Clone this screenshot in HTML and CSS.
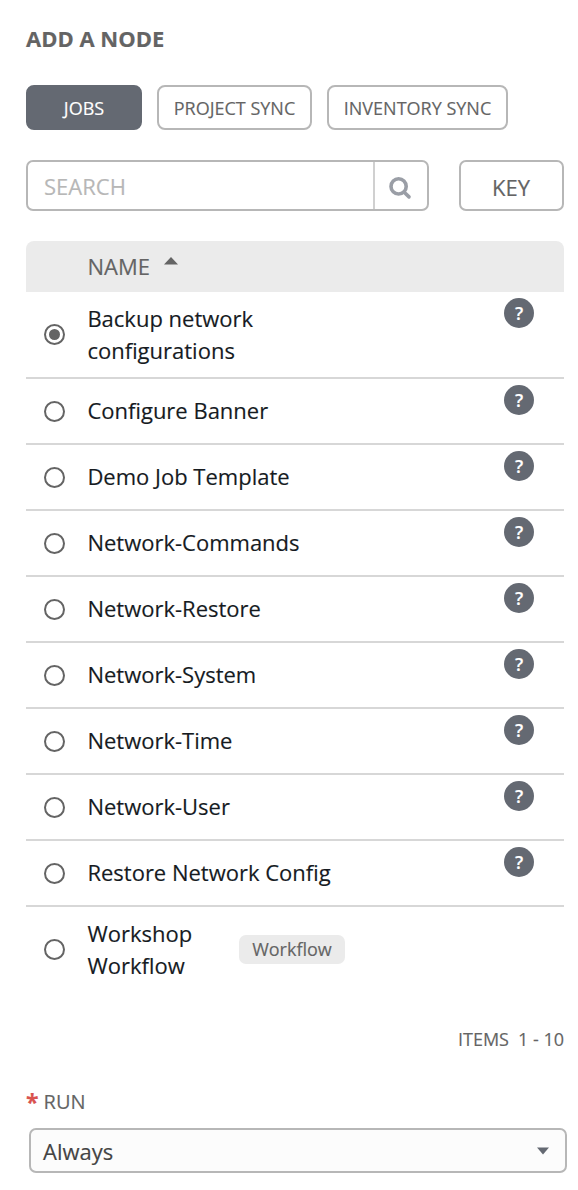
FILE: index.html
```html
<!DOCTYPE html>
<html lang="en">
<head>
<meta charset="utf-8">
<title>Add a node</title>
<link rel="stylesheet" href="styles.css">
</head>
<body>
<main class="panel">
  <h1 class="title">ADD A NODE</h1>
  <nav class="tabs">
    <button class="tab tab-jobs active">JOBS</button>
    <button class="tab tab-project">PROJECT SYNC</button>
    <button class="tab tab-inventory">INVENTORY SYNC</button>
  </nav>
  <div class="toolbar">
    <div class="search">
      <div class="search-field">SEARCH</div>
      <button class="search-btn" aria-label="Search">
        <svg width="24" height="24" viewBox="0 0 24 24"><circle cx="10.6" cy="10.4" r="7.6" fill="none" stroke="#9a9ea6" stroke-width="3.6"/><path d="M16.2 16.2 L21 20.9" stroke="#9a9ea6" stroke-width="3.6" stroke-linecap="round"/></svg>
      </button>
    </div>
    <button class="key">KEY</button>
  </div>
  <section class="list">
    <div class="list-head">NAME<svg class="sort" width="14" height="8" viewBox="0 0 14 8"><path d="M0 7.5 L7 0 L14 7.5Z" fill="#646464"/></svg></div>
    <div class="row tall"><span class="radio checked"></span><span class="name narrow">Backup network configurations</span><span class="help">?</span></div>
    <div class="row"><span class="radio"></span><span class="name">Configure Banner</span><span class="help">?</span></div>
    <div class="row"><span class="radio"></span><span class="name">Demo Job Template</span><span class="help">?</span></div>
    <div class="row"><span class="radio"></span><span class="name">Network-Commands</span><span class="help">?</span></div>
    <div class="row"><span class="radio"></span><span class="name">Network-Restore</span><span class="help">?</span></div>
    <div class="row"><span class="radio"></span><span class="name">Network-System</span><span class="help">?</span></div>
    <div class="row"><span class="radio"></span><span class="name">Network-Time</span><span class="help">?</span></div>
    <div class="row"><span class="radio"></span><span class="name">Network-User</span><span class="help">?</span></div>
    <div class="row"><span class="radio"></span><span class="name">Restore Network Config</span><span class="help">?</span></div>
    <div class="row last"><span class="radio"></span><span class="name short">Workshop Workflow</span><span class="tag">Workflow</span></div>
  </section>
  <div class="count"><span>ITEMS</span><span>1 - 10</span></div>
  <div class="label"><span class="star">*</span><span>RUN</span></div>
  <div class="select"><span>Always</span><svg class="caret" width="12" height="8" viewBox="0 0 12 8"><path d="M0 0.5 H12 L6 7.5Z" fill="#646972"/></svg></div>
</main>
</body>
</html>
```
FILE: styles.css
```css
* { box-sizing: border-box; }

body {
  margin: 0;
  background: #fff;
  color: #646464;
  font-family: "Open Sans", "Noto Sans", sans-serif;
  font-size: 22px;
  -webkit-text-stroke: 0.15px;
}

button {
  margin: 0;
  padding: 0;
  font: inherit;
  color: inherit;
  background: #fff;
}

.panel { padding: 22px 14px 0 26px; }

.title {
  margin: 0;
  height: 32px;
  font-size: 22px;
  line-height: 32px;
  font-weight: 700;
}

.tabs { display: flex; gap: 15px; margin-top: 31px; }

.tab {
  height: 45px;
  border: 2px solid #b7b7b7;
  border-radius: 8px;
  font-size: 18px;
}
.tab-jobs { width: 116px; }
.tab-project { width: 155px; }
.tab-inventory { width: 181px; }
.tab.active { background: #646972; border-color: #646972; color: #fff; }

.toolbar { display: flex; justify-content: space-between; margin-top: 30px; height: 51px; }

.search {
  display: flex;
  width: 403px;
  border: 2px solid #b7b7b7;
  border-radius: 7px;
}
.search-field { flex: 1; padding-left: 16px; line-height: 49px; color: #b7b7b7; }
.search-btn {
  display: flex;
  align-items: center;
  justify-content: center;
  width: 54px;
  padding: 5px 2px 0 0;
  border: 0;
  border-left: 2px solid #d0d0d0;
  background: none;
}
.key {
  width: 105px;
  padding: 3px 1px 0 0;
  border: 2px solid #b7b7b7;
  border-radius: 7px;
}

.list { margin-top: 30px; }
.list-head {
  display: flex;
  height: 51px;
  padding-left: 61.5px;
  line-height: 51px;
  border-radius: 8px 8px 0 0;
  background: #ebebeb;
}
.sort { margin: 16px 0 0 14px; }

.row {
  display: flex;
  align-items: center;
  height: 66px;
  padding-left: 18px;
  border-bottom: 2px solid #d7d7d7;
  color: #161b1f;
  line-height: 32px;
}
.row.tall { height: 87px; }
.row.last { height: 86px; border-bottom: 0; }

.radio {
  display: flex;
  align-items: center;
  justify-content: center;
  width: 21px;
  height: 21px;
  margin-top: 1px;
  border: 2px solid #646464;
  border-radius: 50%;
}
.tall .radio, .last .radio { margin-top: 0; margin-bottom: 1px; }
.radio.checked::before {
  content: "";
  width: 11px;
  height: 11px;
  border-radius: 50%;
  background: #646464;
}

.name { margin: 0 0 2px 22.4px; }
.narrow { width: 200px; }
.short { width: 120px; }

.help {
  align-self: flex-start;
  width: 30px;
  height: 30px;
  margin: 6px 30px 0 auto;
  border-radius: 50%;
  background: #646972;
  color: #fff;
  font-size: 18px;
  font-weight: 600;
  line-height: 30px;
  text-align: center;
}

.tag {
  width: 106px;
  height: 29px;
  margin: 0 0 2px 31.6px;
  border-radius: 7px;
  background: #ebebeb;
  color: #646464;
  font-size: 18px;
  line-height: 29px;
  text-align: center;
}

.count {
  display: flex;
  justify-content: flex-end;
  gap: 9px;
  margin-top: 33px;
  font-size: 18px;
  line-height: 26px;
}

.label {
  display: flex;
  gap: 5px;
  margin-top: 36px;
  font-size: 20px;
  line-height: 28px;
}
.star { color: #d9534f; font-size: 23px; font-weight: 700; }

.select {
  display: flex;
  align-items: center;
  justify-content: space-between;
  width: 538px;
  height: 45px;
  margin: 12px 0 0 3px;
  padding: 0 16px 0 12px;
  border: 2px solid #b7b7b7;
  border-radius: 7px;
  background: #fcfcfc;
  color: #444;
}
```
